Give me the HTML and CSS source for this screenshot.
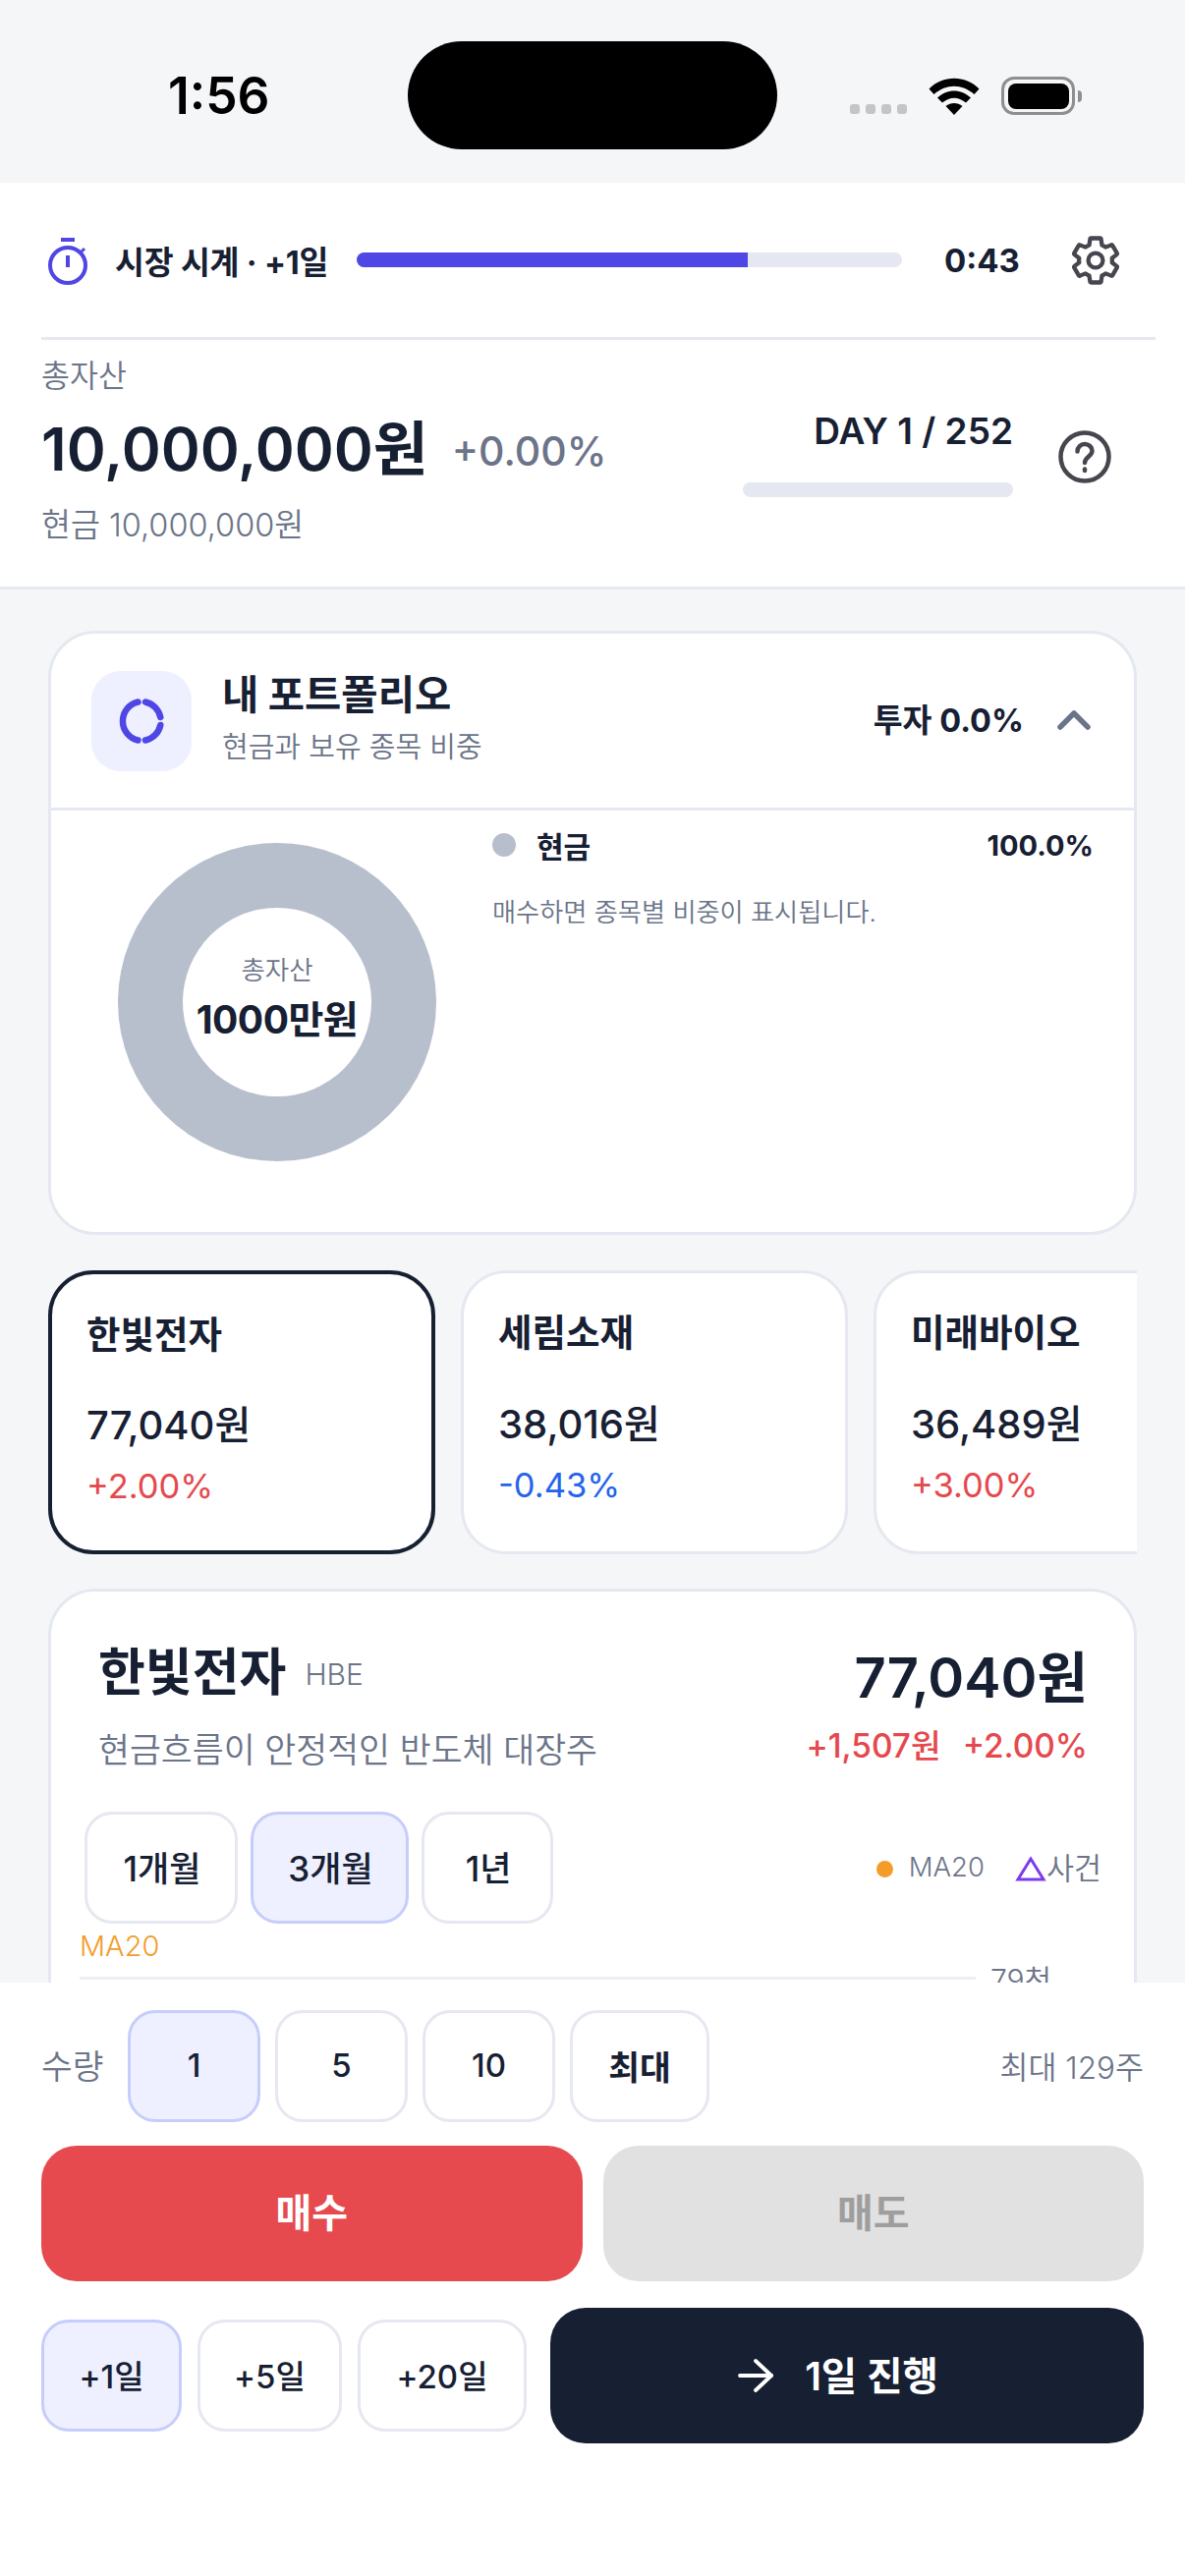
FILE: index.html
```html
<!DOCTYPE html>
<html lang="ko">
<head>
<meta charset="utf-8">
<title>시장 시계</title>
<link rel="stylesheet" href="styles.css">
</head>
<body>
<div class="app">
  <div class="status">
    <div class="time">1:56</div>
    <div class="island"></div>
    <div class="status-icons">
      <div class="signal"><i></i><i></i><i></i><i></i></div>
      <svg class="wifi" width="52" height="38" viewBox="0 0 52 38"><path d="M0.500 11.500 C14 -3 38 -3 51.500 11.500 L46.500 17 C34 6 18 6 5.500 17Z" fill="#000"/><path d="M9 20.500 C19 11 33 11 43 20.500 L38 25.500 C30 19 22 19 14 25.500Z" fill="#000"/><path d="M17.500 29 C22.500 25 29.500 25 34.500 29 L26 38Z" fill="#000"/></svg>
      <div class="battery"><div class="battery-fill"></div></div>
      <div class="battery-cap"></div>
    </div>
  </div>

  <header class="header">
    <div class="clock-row">
      <svg class="stopwatch" width="42" height="48" viewBox="0 0 42 48" fill="none" stroke="#4f46e5" stroke-width="4"><path d="M14 2h14"/><circle cx="21" cy="28" r="18"/><path d="M21 18v12"/><path d="M34 15l4-4" stroke-width="3"/></svg>
      <span class="clock-label">시장 시계 · +1일</span>
      <div class="track clock-track"><div class="fill" style="width:71.7%"></div></div>
      <span class="clock-time">0:43</span>
      <svg class="gear" width="54" height="54" viewBox="0 0 24 24" fill="none" stroke="#46464e" stroke-width="1.9" stroke-linejoin="round"><path d="M19.43 12.98c.04-.32.07-.64.07-.98s-.03-.66-.07-.98l2.11-1.65c.19-.15.24-.42.12-.64l-2-3.46c-.12-.22-.39-.3-.61-.22l-2.49 1c-.52-.4-1.08-.73-1.69-.98l-.38-2.65C14.46 2.18 14.25 2 14 2h-4c-.25 0-.46.18-.49.42l-.38 2.65c-.61.25-1.17.59-1.69.98l-2.49-1c-.23-.09-.49 0-.61.22l-2 3.46c-.13.22-.07.49.12.64l2.11 1.65c-.04.32-.07.65-.07.98s.03.66.07.98l-2.11 1.65c-.19.15-.24.42-.12.64l2 3.46c.12.22.39.3.61.22l2.49-1c.52.4 1.08.73 1.69.98l.38 2.65c.03.24.24.42.49.42h4c.25 0 .46-.18.49-.42l.38-2.65c.61-.25 1.17-.59 1.69-.98l2.49 1c.23.09.49 0 .61-.22l2-3.46c.12-.22.07-.49-.12-.64l-2.11-1.65z"/><circle cx="12" cy="12" r="3.300"/></svg>
    </div>
    <div class="asset">
      <div class="asset-left">
        <div class="asset-label">총자산</div>
        <div class="asset-main"><span class="asset-value">10,000,000원</span><span class="asset-rate">+0.00%</span></div>
        <div class="asset-cash">현금 10,000,000원</div>
      </div>
      <div class="asset-right">
        <div class="day-box">
          <div class="day-label">DAY 1 / 252</div>
          <div class="track day-track"></div>
        </div>
        <svg class="help" width="56" height="56" viewBox="0 0 56 56" fill="none" stroke="#46464e" stroke-width="4.500" stroke-linecap="round"><circle cx="28" cy="28" r="24.500"/><path d="M20.500 22.500c0-4.500 3.500-7.500 7.500-7.500s7.500 3 7.500 7c0 5.500-7.500 6-7.500 12"/><path d="M28 40.500v1.500"/></svg>
      </div>
    </div>
  </header>

  <main class="main">
    <section class="card portfolio">
      <div class="portfolio-head">
        <div class="portfolio-icon">
          <svg width="48" height="48" viewBox="0 0 48 48" fill="none" stroke="#4f46e5" stroke-width="6.500" stroke-linecap="round"><path d="M20.500 4.500A20 20 0 0 0 20.500 43.500"/><path d="M28 4.500A20 20 0 0 1 43.300 20"/><path d="M43.300 28A20 20 0 0 1 28 43.500"/></svg>
        </div>
        <div class="portfolio-titles">
          <div class="portfolio-title">내 포트폴리오</div>
          <div class="portfolio-sub">현금과 보유 종목 비중</div>
        </div>
        <div class="portfolio-rate">투자 0.0%</div>
        <svg class="chevron" width="34" height="22" viewBox="0 0 34 22" fill="none" stroke="#6b7488" stroke-width="5.500" stroke-linecap="round" stroke-linejoin="round"><path d="M3 18L17 4L31 18"/></svg>
      </div>
      <div class="portfolio-body">
        <div class="donut">
          <div class="donut-hole">
            <div class="donut-label">총자산</div>
            <div class="donut-value">1000만원</div>
          </div>
        </div>
        <div class="legend">
          <div class="legend-row">
            <i class="legend-dot"></i>
            <span class="legend-name">현금</span>
            <span class="legend-pct">100.0%</span>
          </div>
          <div class="legend-note">매수하면 종목별 비중이 표시됩니다.</div>
        </div>
      </div>
    </section>

    <div class="stocks">
      <div class="stock stock-active">
        <div class="stock-name">한빛전자</div>
        <div class="stock-price">77,040원</div>
        <div class="stock-change up">+2.00%</div>
      </div>
      <div class="stock">
        <div class="stock-name">세림소재</div>
        <div class="stock-price">38,016원</div>
        <div class="stock-change down">-0.43%</div>
      </div>
      <div class="stock">
        <div class="stock-name">미래바이오</div>
        <div class="stock-price">36,489원</div>
        <div class="stock-change up">+3.00%</div>
      </div>
    </div>

    <section class="card detail">
      <div class="detail-head">
        <div class="detail-left">
          <div class="detail-title"><span class="detail-name">한빛전자</span><span class="detail-code">HBE</span></div>
          <div class="detail-desc">현금흐름이 안정적인 반도체 대장주</div>
        </div>
        <div class="detail-right">
          <div class="detail-price">77,040원</div>
          <div class="detail-change up"><span>+1,507원</span><span>+2.00%</span></div>
        </div>
      </div>
      <div class="range-row">
        <button class="chip range">1개월</button>
        <button class="chip range chip-on">3개월</button>
        <button class="chip range">1년</button>
        <div class="chart-legend">
          <i class="ma-dot"></i><span class="ma-text">MA20</span>
          <svg class="event-tri" width="32" height="26" viewBox="0 0 32 26" fill="none" stroke="#7c3aed" stroke-width="3"><path d="M16 3L29 24H3Z"/></svg><span>사건</span>
        </div>
      </div>
      <div class="chart">
        <div class="chart-ma">MA20</div>
        <div class="chart-grid"><div class="grid-line"></div><span class="grid-label">79천</span></div>
      </div>
    </section>
  </main>

  <footer class="panel">
    <div class="qty-row">
      <span class="qty-label">수량</span>
      <button class="chip qty chip-on">1</button>
      <button class="chip qty">5</button>
      <button class="chip qty">10</button>
      <button class="chip qty qty-max">최대</button>
      <span class="qty-limit">최대 129주</span>
    </div>
    <div class="trade-row">
      <button class="trade buy">매수</button>
      <button class="trade sell">매도</button>
    </div>
    <div class="day-row">
      <button class="chip step step-1 chip-on">+1일</button>
      <button class="chip step step-5">+5일</button>
      <button class="chip step step-20">+20일</button>
      <button class="go">
        <svg width="36" height="36" viewBox="0 0 36 36" fill="none" stroke="#fff" stroke-width="3.800" stroke-linecap="round" stroke-linejoin="round"><path d="M2 18H34"/><path d="M18 3L34 18L18 33"/></svg>
        <span>1일 진행</span>
      </button>
    </div>
  </footer>
</div>
</body>
</html>
```

FILE: styles.css
```css
* { box-sizing: border-box; }
html, body { margin: 0; padding: 0; }
body {
  width: 1206px;
  height: 2622px;
  overflow: hidden;
  background: #fff;
  font-family: Inter, "Noto Sans CJK KR", sans-serif;
  color: #172033;
}
button { font: inherit; color: inherit; padding: 0; margin: 0; cursor: pointer; }
i { display: block; }

.app { display: flex; flex-direction: column; height: 2622px; }

/* status bar */
.status {
  position: relative;
  flex: none;
  height: 186px;
  background: #f5f6f8;
  display: flex;
  align-items: center;
  justify-content: space-between;
  padding: 9px 105px 0 171px;
}
.time { font-size: 51.5px; font-weight: 600; color: #000; line-height: 1; }
.island {
  position: absolute;
  left: 415px;
  top: 42px;
  width: 376px;
  height: 110px;
  border-radius: 55px;
  background: #000;
}
.status-icons { display: flex; align-items: center; height: 56px; }
.signal { display: flex; gap: 6px; margin-right: 22px; margin-top: 27px; }
.signal i { width: 10px; height: 10px; border-radius: 3px; background: #c4c5c8; }
.wifi { margin-right: 22px; }
.battery {
  width: 75px;
  height: 39px;
  border: 3.500px solid #8e8e93;
  border-radius: 13px;
  padding: 3.500px;
}
.battery-fill { width: 100%; height: 100%; border-radius: 8px; background: #000; }
.battery-cap { width: 4px; height: 12px; margin-left: 3px; border-radius: 0 6px 6px 0; background: #8e8e93; }

/* header */
.header { flex: none; background: #fff; border-bottom: 3px solid #e5e8f0; height: 414px; }
.clock-row {
  display: flex;
  align-items: center;
  height: 160px;
  margin: 0 30px 0 42px;
  padding: 0 33px 0 6px;
  border-bottom: 3px solid #e5e8f0;
}
.stopwatch { flex: none; margin-top: 2px; }
.clock-label { margin-left: 27px; font-size: 32.5px; font-weight: 700; letter-spacing: -0.2px; white-space: nowrap; width: 246px; }
.track { background: #e5e8f0; border-radius: 8px; height: 15px; overflow: hidden; }
.clock-track { width: 555px; }
.fill { height: 100%; background: #4f46e5; }
.clock-time { margin-left: 43px; font-size: 33px; font-weight: 700; }
.gear { margin-left: 50px; flex: none; }

.asset { display: flex; justify-content: space-between; padding: 15px 74px 0 42px; }
.asset-label { font-size: 31.5px; line-height: 44px; color: #6b7488; font-weight: 350; }
.asset-main { display: flex; align-items: center; gap: 24px; margin-top: 16px; }
.asset-value { font-size: 60.7px; font-weight: 600; line-height: 72px; }
.asset-rate { font-size: 41px; line-height: 48px; color: #6b7488; font-weight: 500; margin-top: 4px; }
.asset-cash { font-size: 32.5px; line-height: 44px; margin-top: 20px; color: #6b7488; font-weight: 350; }
.asset-right { display: flex; align-items: flex-start; }
.day-box { display: flex; flex-direction: column; align-items: flex-end; padding-top: 56px; }
.day-label { font-size: 37px; font-weight: 600; line-height: 44px; }
.day-track { width: 275px; margin-top: 30px; }
.help { margin: 76px 0 0 45px; }

/* main */
.main {
  flex: 1;
  min-height: 0;
  overflow: hidden;
  background: #f5f6f8;
  padding: 42px 49px 0;
}
.card { background: #fff; border: 3px solid #e5e8f0; border-radius: 48px; }
.portfolio { height: 615px; }
.portfolio-head {
  display: flex;
  align-items: center;
  height: 180px;
  padding: 0 44px 0 41px;
  border-bottom: 3px solid #e5e8f0;
}
.portfolio-icon {
  flex: none;
  width: 102px;
  height: 102px;
  border-radius: 30px;
  background: #eef0ff;
  display: flex;
  align-items: center;
  justify-content: center;
}
.portfolio-titles { flex: 1; margin-left: 31px; }
.portfolio-title { font-size: 40.5px; font-weight: 700; line-height: 52px; margin-top: -5px; }
.portfolio-sub { font-size: 29px; line-height: 40px; color: #6b7488; margin-top: 7px; font-weight: 350; }
.portfolio-rate { font-size: 32.5px; font-weight: 700; margin-top: -6px; }
.chevron { margin-left: 34px; margin-top: -2px; }
.portfolio-body { display: flex; padding: 33px 41px 0 68px; }
.donut {
  flex: none;
  width: 324px;
  height: 324px;
  border-radius: 50%;
  background: #b8bfcc;
  display: flex;
  align-items: center;
  justify-content: center;
}
.donut-hole {
  width: 192px;
  height: 192px;
  border-radius: 50%;
  background: #fff;
  display: flex;
  flex-direction: column;
  align-items: center;
  justify-content: center;
  padding-bottom: 6px;
}
.donut-label { font-size: 26.5px; line-height: 34px; color: #6b7488; font-weight: 350; }
.donut-value { font-size: 39px; font-weight: 700; line-height: 52px; margin-top: 8px; letter-spacing: -0.5px; }
.legend { flex: 1; margin-left: 57px; margin-top: -18px; }
.legend-row { display: flex; align-items: center; height: 40px; }
.legend-dot { width: 24px; height: 24px; border-radius: 50%; background: #b8bfcc; }
.legend-name { margin-left: 21px; font-size: 30px; font-weight: 700; flex: 1; }
.legend-pct { font-size: 29px; font-weight: 700; }
.legend-note { font-size: 26.2px; line-height: 36px; color: #6b7488; margin-top: 31px; font-weight: 350; }

/* stock cards */
.stocks { display: flex; gap: 26px; margin-top: 36px; overflow: hidden; }
.stock {
  flex: none;
  width: 394px;
  height: 289px;
  background: #fff;
  border: 3px solid #e5e8f0;
  border-radius: 46px;
  padding: 36px 0 0 35px;
}
.stock-active { border: 4px solid #172033; padding: 37px 0 0 35px; }
.stock-name { font-size: 37.5px; font-weight: 600; line-height: 50px; }
.stock-price { font-size: 40px; font-weight: 500; line-height: 50px; margin-top: 42px; }
.stock-change { font-size: 34.5px; line-height: 44px; margin-top: 15px; }
.up { color: #e5484d; }
.down { color: #2563eb; }
.stock:not(.stock-active) .stock-price { margin-top: 43px; }

/* detail */
.detail { margin-top: 35px; height: 700px; padding: 48px 47px 0 34px; }
.detail-head { display: flex; justify-content: space-between; padding-left: 14px; }
.detail-title { display: flex; align-items: center; gap: 19px; }
.detail-name { font-size: 52px; font-weight: 700; line-height: 70px; }
.detail-code { font-size: 30px; color: #6b7488; font-weight: 350; margin-top: 2px; }
.detail-desc { font-size: 34.7px; line-height: 46px; margin-top: 20px; color: #6b7488; font-weight: 350; }
.detail-right { text-align: right; padding-top: 5px; }
.detail-price { font-size: 56px; font-weight: 600; line-height: 70px; }
.detail-change { display: flex; justify-content: flex-end; gap: 22px; font-size: 33.4px; font-weight: 500; line-height: 44px; margin-top: 12px; }
.range-row { display: flex; align-items: center; gap: 13px; margin-top: 40px; }

.chip {
  display: flex;
  align-items: center;
  justify-content: center;
  background: #fff;
  border: 3px solid #e5e8f0;
  border-radius: 28px;
  font-weight: 500;
  padding-bottom: 3px;
}
.chip-on { background: #eef0ff; border-color: #c7cdfb; }
.range { height: 114px; font-size: 35px; padding-left: 2px; }
.range:nth-child(1) { width: 156px; }
.range:nth-child(2) { width: 161px; }
.range:nth-child(3) { width: 134px; }
.chart-legend { margin-left: auto; display: flex; align-items: center; font-size: 30.5px; color: #6b7488; margin-right: -14px; padding-bottom: 2px; font-weight: 350; }
.ma-dot { width: 17px; height: 17px; border-radius: 50%; background: #f39c28; margin-top: 5px; }
.ma-text { margin-left: 16px; font-size: 27.5px; }
.event-tri { margin-left: 31px; margin-top: 3px; }
.chart { position: relative; margin: 0 -8px 0 -5px; height: 100px; }
.chart-ma { position: absolute; left: 0; top: 5px; font-size: 29px; line-height: 36px; color: #f39c28; font-weight: 350; }
.chart-grid { display: flex; align-items: center; padding-top: 33px; }
.grid-line { width: 912px; height: 3px; background: #eceef3; }
.grid-label { margin-left: 15px; font-size: 30px; color: #6b7488; font-weight: 350; }

/* bottom panel */
.panel { flex: none; height: 604px; background: #fff; padding: 28px 42px 0; position: relative; }
.qty-row { display: flex; align-items: center; gap: 15px; }
.qty-label { font-size: 34.5px; color: #6b7488; width: 73px; white-space: nowrap; padding-bottom: 4px; font-weight: 350; }
.qty { width: 135px; height: 114px; font-size: 33px; }
.qty-max { width: 142px; font-weight: 600; font-size: 34.5px; }
.qty-limit { margin-left: auto; font-size: 31.5px; color: #6b7488; padding-bottom: 3px; font-weight: 350; }
.trade-row { display: flex; gap: 21px; margin-top: 24px; }
.trade { flex: 1; height: 138px; border: 0; border-radius: 36px; font-size: 40px; font-weight: 700; padding-bottom: 6px; }
.buy { background: #e64a4f; color: #fff; }
.sell { background: #e1e1e1; color: #9e9e9e; }
.day-row { display: flex; align-items: center; gap: 16px; margin-top: 27px; }
.step { height: 114px; font-size: 33px; }
.step-1 { width: 143px; }
.step-5 { width: 147px; }
.step-20 { width: 172px; }
.go {
  flex: 1;
  height: 138px;
  margin-left: 8px;
  padding-right: 18px;
  border: 0;
  border-radius: 36px;
  background: #172033;
  color: #fff;
  font-size: 39.500px;
  font-weight: 600;
  display: flex;
  align-items: center;
  justify-content: center;
  gap: 32px;
}
.go span { margin-bottom: 6px; }
```
